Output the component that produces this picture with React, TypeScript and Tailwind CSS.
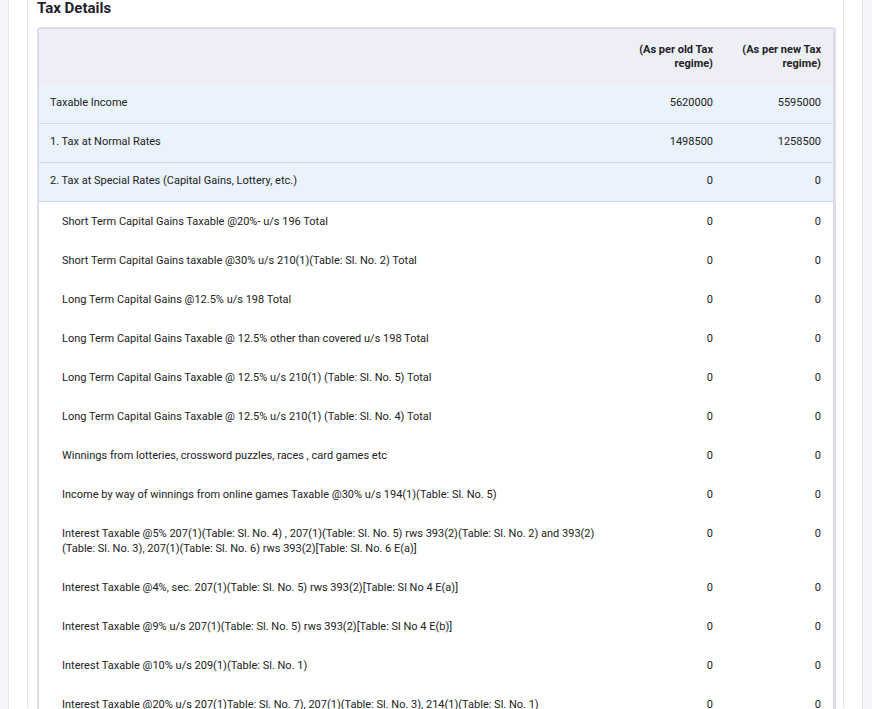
const rows: [string, string, string][] = [
  ['Short Term Capital Gains Taxable @20%- u/s 196 Total', '0', '0'],
  ['Short Term Capital Gains taxable @30% u/s 210(1)(Table: Sl. No. 2) Total', '0', '0'],
  ['Long Term Capital Gains @12.5% u/s 198 Total', '0', '0'],
  ['Long Term Capital Gains Taxable @ 12.5% other than covered u/s 198 Total', '0', '0'],
  ['Long Term Capital Gains Taxable @ 12.5% u/s 210(1) (Table: Sl. No. 5) Total', '0', '0'],
  ['Long Term Capital Gains Taxable @ 12.5% u/s 210(1) (Table: Sl. No. 4) Total', '0', '0'],
  ['Winnings from lotteries, crossword puzzles, races , card games etc', '0', '0'],
  ['Income by way of winnings from online games Taxable @30% u/s 194(1)(Table: Sl. No. 5)', '0', '0'],
  ['Interest Taxable @5% 207(1)(Table: Sl. No. 4) , 207(1)(Table: Sl. No. 5) rws 393(2)(Table: Sl. No. 2) and 393(2)(Table: Sl. No. 3), 207(1)(Table: Sl. No. 6) rws 393(2)[Table: Sl. No. 6 E(a)]', '0', '0'],
  ['Interest Taxable @4%, sec. 207(1)(Table: Sl. No. 5) rws 393(2)[Table: Sl No 4 E(a)]', '0', '0'],
  ['Interest Taxable @9% u/s 207(1)(Table: Sl. No. 5) rws 393(2)[Table: Sl No 4 E(b)]', '0', '0'],
  ['Interest Taxable @10% u/s 209(1)(Table: Sl. No. 1)', '0', '0'],
  ['Interest Taxable @20% u/s 207(1)Table: Sl. No. 7), 207(1)(Table: Sl. No. 3), 214(1)(Table: Sl. No. 1)', '0', '0'],
];

const top: [string, string, string][] = [
  ['Taxable Income', '5620000', '5595000'],
  ['1. Tax at Normal Rates', '1498500', '1258500'],
  ['2. Tax at Special Rates (Capital Gains, Lottery, etc.)', '0', '0'],
];

export default function App() {
  return (
    <div className="flex h-[709px] overflow-hidden bg-[#f5f6fb] text-[#222] text-[11px]" style={{ fontFamily: 'Roboto, "Liberation Sans", sans-serif' }}>
      <div className="w-[9px] shrink-0 border-r border-[#e3e5ee]" />
      <div className="w-[853px] shrink-0 bg-white pl-[18px] pr-[18px]">
        <div className="h-full border-x border-[#e3e5ee] pl-[9px] pr-[7px]">
          <h2 className="text-[15px] font-bold leading-[18px] -mt-[1px] mb-[10px] text-[#1f1f2e]">Tax Details</h2>
          <div className="border-l-2 border-r-[3px] border-t-2 border-[#dcdde9] rounded-t">
            <table className="w-full border-collapse">
              <colgroup>
                <col />
                <col className="w-[108px]" />
                <col className="w-[108px]" />
              </colgroup>
              <thead>
                <tr className="bg-[#eeeef6] h-[55px]">
                  <th />
                  <th className="text-right font-bold pr-3 leading-[14px]">(As per old Tax regime)</th>
                  <th className="text-right font-bold pr-3 leading-[14px]">(As per new Tax regime)</th>
                </tr>
              </thead>
              <tbody>
                {top.map(([l, a, b]) => (
                  <tr key={l} className="bg-[#eaf2fb] h-[39px] border-b border-[#cfd8ea]">
                    <td className="pl-[11px]">{l}</td>
                    <td className="text-right pr-3">{a}</td>
                    <td className="text-right pr-3">{b}</td>
                  </tr>
                ))}
                {rows.map(([l, a, b]) => (
                  <tr key={l}>
                    <td className="pl-[23px] pr-4 py-[12px] align-top leading-[15px]">{l}</td>
                    <td className="text-right pr-3 py-[12px] align-top leading-[15px]">{a}</td>
                    <td className="text-right pr-3 py-[12px] align-top leading-[15px]">{b}</td>
                  </tr>
                ))}
              </tbody>
            </table>
          </div>
        </div>
      </div>
      <div className="flex-1 border-l border-[#e3e5ee]" />
    </div>
  );
}
